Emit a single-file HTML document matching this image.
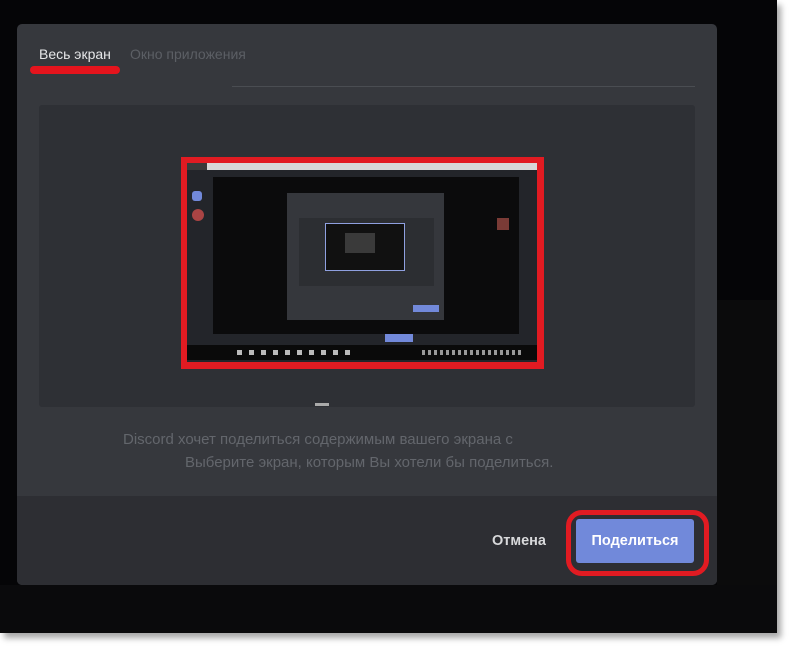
<!DOCTYPE html>
<html><head><meta charset="utf-8"><style>
*{margin:0;padding:0;box-sizing:border-box}
body{width:800px;height:656px;background:#fff;position:relative;overflow:hidden;font-family:"Liberation Sans","DejaVu Sans",sans-serif}
.a{position:absolute}
</style></head><body>
<div class="a" style="left:0;top:0;width:777px;height:633px;background:#050507;box-shadow:4px 5px 6px rgba(0,0,0,.35)"></div>
<div class="a" style="left:717px;top:300px;width:60px;height:333px;background:#0b0b0c"></div>
<div class="a" style="left:0;top:585px;width:777px;height:48px;background:#0a0a0c"></div>
<div class="a" style="left:17px;top:24px;width:700px;height:561px;background:#36383d;border-radius:5px;overflow:hidden">
  <div class="a" style="left:22px;top:22px;font-size:14px;color:#e6e7e9">Весь экран</div>
  <div class="a" style="left:113px;top:22px;font-size:14px;color:#5c5f65">Окно приложения</div>
  <div class="a" style="left:13px;top:42px;width:90px;height:8px;background:#e5141d;border-radius:4px"></div>
  <div class="a" style="left:215px;top:62px;width:463px;height:1px;background:#4a4d52"></div>
  <div class="a" style="left:22px;top:81px;width:656px;height:302px;background:#2e3035;border-radius:3px"></div>
  <div class="a" style="left:298px;top:379px;width:14px;height:3px;background:#aaa"></div>
  <div class="a" style="left:106px;top:407px;font-size:15px;color:#63666c;white-space:nowrap">Discord хочет поделиться содержимым вашего экрана с</div>
  <div class="a" style="left:168px;top:430px;font-size:15px;color:#63666c;white-space:nowrap">Выберите экран, которым Вы хотели бы поделиться.</div>
  <div class="a" style="left:0;top:472px;width:700px;height:89px;background:#2d2e33"></div>
  <div class="a" style="left:475px;top:509px;font-size:14.5px;font-weight:bold;color:#d8d9db">Отмена</div>
</div>
<div class="a" style="left:181px;top:157px;width:363px;height:212px;background:#e11b22"></div>
<div class="a" style="left:187px;top:163px;width:350px;height:199px;background:#23252a;overflow:hidden">
  <div class="a" style="left:0;top:0;width:350px;height:7px;background:#d8d8d8"></div>
  <div class="a" style="left:0;top:0;width:20px;height:7px;background:#3a3a3a"></div>
  <div class="a" style="left:5px;top:28px;width:10px;height:10px;background:#7289da;border-radius:3px"></div>
  <div class="a" style="left:5px;top:46px;width:12px;height:12px;background:#a44;border-radius:6px"></div>
  <div class="a" style="left:26px;top:14px;width:306px;height:157px;background:#0b0b0c"></div>
  <div class="a" style="left:310px;top:55px;width:12px;height:12px;background:#7a3b36"></div>
  <div class="a" style="left:100px;top:30px;width:157px;height:127px;background:#35373c"></div>
  <div class="a" style="left:112px;top:55px;width:135px;height:68px;background:#2c2e32"></div>
  <div class="a" style="left:138px;top:60px;width:80px;height:48px;background:#111;border:1.5px solid #8fa0e0"></div>
  <div class="a" style="left:158px;top:70px;width:30px;height:20px;background:#3a3a3a"></div>
  <div class="a" style="left:226px;top:142px;width:26px;height:7px;background:#7289da"></div>
  <div class="a" style="left:198px;top:171px;width:28px;height:8px;background:#7289da"></div>
  <div class="a" style="left:0;top:182px;width:350px;height:15px;background:#0a0a0a"></div>
  <div class="a" style="left:50px;top:187px;width:120px;height:5px;background:repeating-linear-gradient(90deg,#bbb 0 5px,transparent 5px 12px)"></div>
  <div class="a" style="left:235px;top:187px;width:100px;height:5px;background:repeating-linear-gradient(90deg,#999 0 3px,transparent 3px 6px)"></div>
</div>
<div class="a" style="left:566px;top:510px;width:143px;height:66px;border:5px solid #e11b22;border-radius:16px"></div>
<div class="a" style="left:576px;top:519px;width:118px;height:44px;background:#7189da;border-radius:3px;color:#fff;font-size:14.5px;font-weight:bold;text-align:center;line-height:44px">Поделиться</div>
</body></html>
